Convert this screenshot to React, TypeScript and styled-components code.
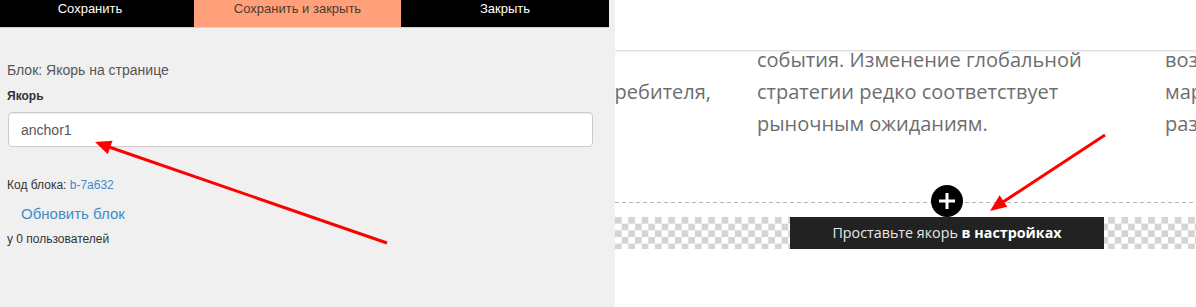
import React from "react";
import styled, { createGlobalStyle } from "styled-components";

const Global = createGlobalStyle`
  html, body { margin: 0; padding: 0; background: #fff; }
  #root { width: 1196px; height: 307px; }
`;

const Page = styled.div`
  position: relative;
  display: flex;
  width: 1196px;
  height: 307px;
  overflow: hidden;
  font-family: "Liberation Sans", Arial, sans-serif;
`;

const Sidebar = styled.aside`
  flex: 0 0 615px;
  background: #f0f0f0;
  display: flex;
  flex-direction: column;
`;

const Toolbar = styled.div`
  display: flex;
  width: 609px;
  height: 27px;
  border-bottom: 1px solid #d4d4d4;
`;

const ToolButton = styled.button<{ $w: number; $accent?: boolean; $shift?: number }>`
  flex: 0 0 ${(p) => p.$w}px;
  height: 27px;
  margin: 0;
  border: 0;
  padding: 0 ${(p) => p.$shift ?? 0}px 0 0;
  display: flex;
  align-items: flex-start;
  justify-content: center;
  background: ${(p) => (p.$accent ? "#ffa07a" : "#000")};
  color: ${(p) => (p.$accent ? "#4b3b33" : "#fff")};
  font: 13px/17px "Liberation Sans", Arial, sans-serif;
  cursor: pointer;
`;

const Body = styled.div`
  padding: 32px 0 0 7px;
  display: flex;
  flex-direction: column;
  align-items: flex-start;
`;

const BlockTitle = styled.div`
  font-size: 14px;
  line-height: 20px;
  color: #555;
`;

const FieldLabel = styled.label`
  margin-top: 8px;
  font-size: 12px;
  line-height: 17px;
  font-weight: 700;
  color: #333;
`;

const TextInput = styled.input`
  margin: 7px 0 0 1px;
  box-sizing: border-box;
  width: 585px;
  height: 35px;
  padding: 6px 12px;
  border: 1px solid #ccc;
  border-radius: 4px;
  background: #fff;
  font: 14px "Liberation Sans", Arial, sans-serif;
  color: #555;
  box-shadow: inset 0 1px 1px rgba(0, 0, 0, 0.075);
  outline: none;
`;

const Meta = styled.div<{ $mt: number }>`
  margin-top: ${(p) => p.$mt}px;
  font-size: 12px;
  line-height: 17px;
  color: #333;
`;

const CodeLink = styled.a`
  color: #428bca;
  text-decoration: none;
`;

const ActionLink = styled.a`
  margin: 10px 0 0 14px;
  font-size: 15px;
  line-height: 20px;
  color: #428bca;
  text-decoration: none;
  cursor: pointer;
`;

const Canvas = styled.main`
  flex: 1;
  min-width: 0;
  position: relative;
  background: #fff;
  overflow: hidden;
  display: flex;
  flex-direction: column;
`;

const SiteHeader = styled.header`
  position: relative;
  z-index: 1;
  flex: 0 0 50px;
  background: #fff;
  border-bottom: 1px solid #e0e0e0;
  box-shadow: 0 1px 2px rgba(0, 0, 0, 0.08);
`;

const Columns = styled.div`
  display: flex;
  gap: 46px;
  margin: -7px 0 0 -266px;
  font-family: "Open Sans", "DejaVu Sans", sans-serif;
  font-weight: 400;
  font-size: 20px;
  line-height: 32px;
  color: #6e6e6e;
`;

const Column = styled.div<{ $align?: "left" | "right" }>`
  flex: 0 0 362px;
  text-align: ${(p) => p.$align ?? "left"};
  white-space: nowrap;
`;

const Divider = styled.div`
  margin-top: 62px;
  height: 1px;
  background: repeating-linear-gradient(to right, #b4b4b4 0 4px, transparent 4px 7px);
`;

const Band = styled.div`
  margin-top: 14px;
  height: 32px;
  display: flex;
  background-color: #fff;
  background-image: conic-gradient(
    transparent 25%,
    #d4d4d4 0 50%,
    transparent 0 75%,
    #d4d4d4 0
  );
  background-size: 13.33px 13.33px;
`;

const AnchorLabel = styled.div`
  position: relative;
  margin-left: 175px;
  width: 314px;
  height: 32px;
  background: #222;
  color: #e8e8e8;
  font-family: "Open Sans", "DejaVu Sans", sans-serif;
  font-weight: 400;
  font-size: 14.3px;
  line-height: 32px;
  text-align: center;

  b {
    font-weight: 700;
    color: #fff;
  }
`;

const AddButton = styled.button`
  position: absolute;
  left: 50%;
  top: -32px;
  transform: translateX(-50%);
  width: 32px;
  height: 32px;
  padding: 0;
  border: 0;
  border-radius: 50%;
  background: #000;
  display: flex;
  align-items: center;
  justify-content: center;
`;

const Overlay = styled.svg`
  position: absolute;
  left: 0;
  top: 0;
  width: 1196px;
  height: 307px;
  pointer-events: none;
`;

export default function App() {
  return (
    <>
      <Global />
      <Page>
        <Sidebar>
          <Toolbar>
            <ToolButton $w={194} $shift={14}>Сохранить</ToolButton>
            <ToolButton $w={207} $accent>Сохранить и закрыть</ToolButton>
            <ToolButton $w={208}>Закрыть</ToolButton>
          </Toolbar>
          <Body>
            <BlockTitle>Блок: Якорь на странице</BlockTitle>
            <FieldLabel htmlFor="anchor">Якорь</FieldLabel>
            <TextInput id="anchor" defaultValue="anchor1" readOnly />
            <Meta $mt={30}>
              Код блока: <CodeLink>b-7a632</CodeLink>
            </Meta>
            <ActionLink>Обновить блок</ActionLink>
            <Meta $mt={7}>у 0 пользователей</Meta>
          </Body>
        </Sidebar>
        <Canvas>
          <SiteHeader />
          <Columns>
            <Column $align="right">
              <div>&nbsp;</div>
              <div>интересы потребителя,</div>
              <div>&nbsp;</div>
            </Column>
            <Column>
              <div>события. Изменение глобальной</div>
              <div>стратегии редко соответствует</div>
              <div>рыночным ожиданиям.</div>
            </Column>
            <Column>
              <div>возможности</div>
              <div>маркетинговой</div>
              <div>развития</div>
            </Column>
          </Columns>
          <Divider />
          <Band>
            <AnchorLabel>
              <AddButton aria-label="Добавить блок">
                <svg width="18" height="18" viewBox="0 0 18 18">
                  <path d="M9 1v16M1 9h16" stroke="#fff" strokeWidth="3" />
                </svg>
              </AddButton>
              Проставьте якорь <b>в настройках</b>
            </AnchorLabel>
          </Band>
        </Canvas>
        <Overlay viewBox="0 0 1196 307">
          <line x1="387" y1="243" x2="109" y2="147" stroke="#f00" strokeWidth="3" />
          <polygon points="95,142 112.5,140.8 107.8,154.3" fill="#f00" />
          <line x1="1105" y1="135" x2="1003" y2="202" stroke="#f00" strokeWidth="3" />
          <polygon points="990,211 1007.3,206.8 999.6,195.2" fill="#f00" />
        </Overlay>
      </Page>
    </>
  );
}
